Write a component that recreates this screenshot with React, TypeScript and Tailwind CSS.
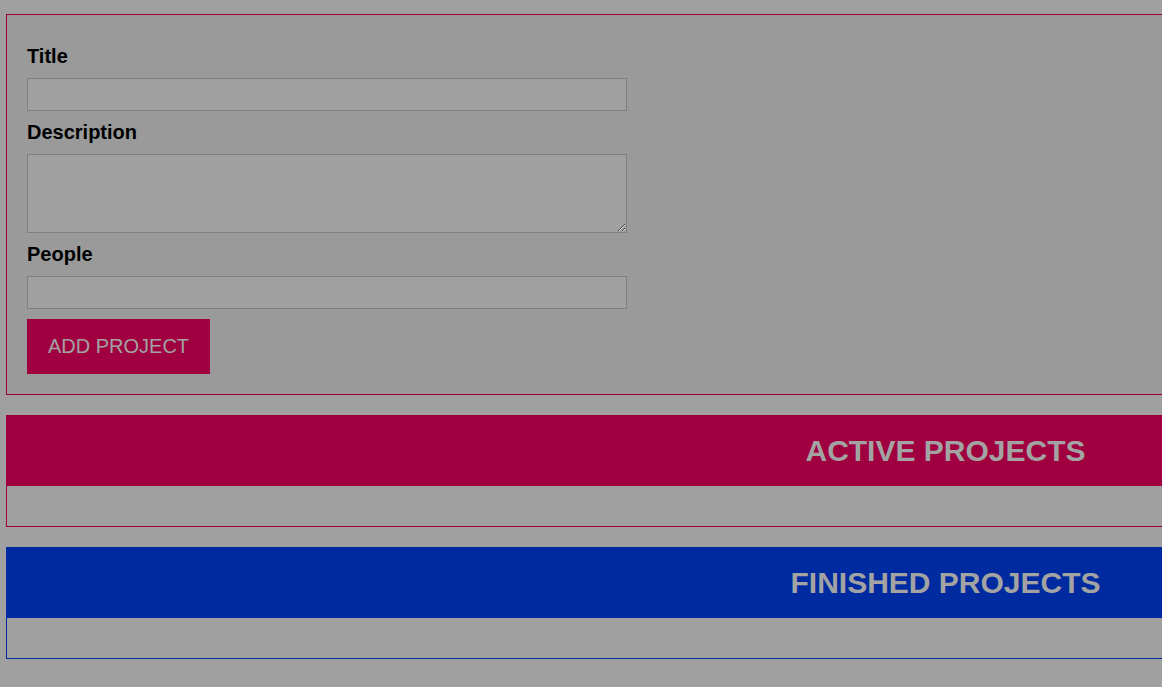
import React from "react";

export default function App() {
  return (
    <div
      className="w-full min-h-screen overflow-hidden bg-[#a0a0a0] pt-[14px] pb-[40px]"
      style={{ fontFamily: '"Liberation Sans", Arial, sans-serif' }}
    >
      <form
        className="ml-[6px] w-[1879px] border border-[#a0003f] bg-[#9a9a9a] px-[20px] pt-[30px] pb-[20px]"
        onSubmit={(e) => e.preventDefault()}
      >
        <label className="block text-[20px] leading-[23px] font-bold text-black mb-[10px]">Title</label>
        <input
          type="text"
          className="block w-[600px] h-[33px] border border-[#7f7f7f] bg-[#a0a0a0] mb-[10px] outline-none"
        />
        <label className="block text-[20px] leading-[23px] font-bold text-black mb-[10px]">Description</label>
        <textarea
          className="block w-[600px] h-[79px] border border-[#7f7f7f] bg-[#a0a0a0] mb-[10px] outline-none"
        />
        <label className="block text-[20px] leading-[23px] font-bold text-black mb-[10px]">People</label>
        <input
          type="text"
          className="block w-[600px] h-[33px] border border-[#7f7f7f] bg-[#a0a0a0] mb-[10px] outline-none"
        />
        <button
          type="submit"
          className="block w-[183px] h-[55px] bg-[#a0003f] text-[#a3a3a3] text-[20px] leading-[23px]"
        >
          ADD PROJECT
        </button>
      </form>

      <section className="ml-[6px] mt-[20px] w-[1879px] border border-[#a0003f] bg-[#a0a0a0]">
        <header className="h-[70px] bg-[#a0003f] flex items-center justify-center">
          <h2 className="text-[30px] font-bold text-[#a3a3a3] leading-none">ACTIVE PROJECTS</h2>
        </header>
        <ul className="h-[40px]" />
      </section>

      <section className="ml-[6px] mt-[20px] w-[1879px] border border-[#002ba0] bg-[#a0a0a0]">
        <header className="h-[70px] bg-[#002ba0] flex items-center justify-center">
          <h2 className="text-[30px] font-bold text-[#a3a3a3] leading-none">FINISHED PROJECTS</h2>
        </header>
        <ul className="h-[40px]" />
      </section>
    </div>
  );
}
